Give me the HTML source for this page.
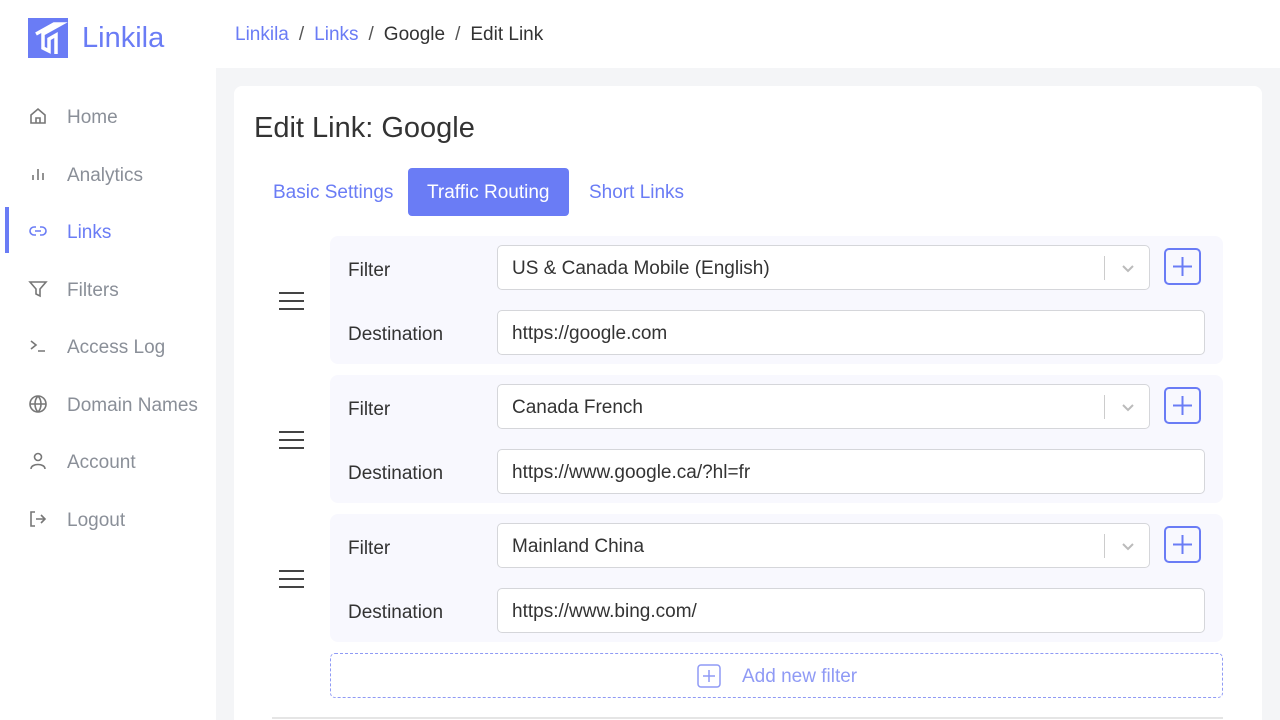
<!DOCTYPE html>
<html style="width:1280px;height:720px;overflow:hidden"><head><style>
*{box-sizing:border-box;margin:0;padding:0}
body{width:1280px;height:720px;overflow:hidden;background:#f4f5f7;font-family:"Liberation Sans",sans-serif;position:relative;color:#333}
.side{position:absolute;left:0;top:0;width:216px;height:720px;background:#fff}
.logo{position:absolute;left:28px;top:18px}
.logotxt{position:absolute;left:82px;top:22px;font-size:29px;color:#6a7cf5}
.nav{position:absolute;left:0;width:216px;height:40px;display:flex;align-items:center;font-size:19px;color:#8a8f98}
.nav svg{position:absolute;left:28px}
.nav span{position:absolute;left:67px;top:11px}
.nav.act{color:#6a7cf5}
.bar{position:absolute;left:5px;width:4px;height:46px;background:#6a7cf5;top:207px}
.top{position:absolute;left:216px;top:0;width:1064px;height:68px;background:#fff;font-size:19px;padding:24px 0 0 19px;color:#333}
.top a{color:#6a7cf5}
.top i{font-style:normal;color:#555;margin:0 10px}
.card{position:absolute;left:234px;top:86px;width:1028px;height:634px;background:#fff;border-radius:8px 8px 0 0}
h1{position:absolute;left:254px;top:112px;font-size:29px;font-weight:normal;color:#333}
.tab{position:absolute;top:168px;height:48px;font-size:19px;color:#6a7cf5;line-height:50px}
.tab.on{background:#6a7cf5;color:#fff;border-radius:4px;padding:0 19px}
.row{position:absolute;left:330px;width:893px;height:128px;background:#f8f8fe;border-radius:8px}
.lbl{position:absolute;left:18px;font-size:19px;color:#333}
.inp{position:absolute;left:167px;height:45px;background:#fff;border:1px solid #d5d6da;border-radius:5px;font-size:19px;padding:0 14px;line-height:46px;color:#333}
.sel{width:653px;top:9px}
.dst{width:708px;top:74px}
.sep{position:absolute;right:44px;top:10px;width:1px;height:24px;background:#ccc}
.chev{position:absolute;right:14px;top:15px}
.plus{position:absolute;left:834px;top:12px;width:37px;height:37px;border:2px solid #6a7cf5;border-radius:5px}
.ham{position:absolute;left:279px}
.ham div{width:25px;height:2px;background:#444;margin-bottom:6px}
.add{position:absolute;left:330px;top:653px;width:893px;height:45px;border:1px dashed #8f9af5;border-radius:5px;color:#8f9af5;font-size:19px;line-height:46px;padding-left:411px}
</style></head><body>
<div class="side">
<svg class="logo" width="40" height="40" viewBox="0 0 40 40"><rect width="40" height="40" fill="#6a7cf5"/><path d="M8 16 L26 6 L33 6 L15 16 L15 30 L21 33 L21 21 L28 17 L28 36" fill="none" stroke="#fff" stroke-width="3.5"/></svg>
<div class="logotxt">Linkila</div>
<div class="nav" style="top:96px"><svg width="20" height="20" viewBox="0 0 20 20" fill="none" stroke="#777" stroke-width="1.6"><path d="M3 9 L10 3 L17 9 V17 H3 Z M8 17 V12 H12 V17"/></svg><span>Home</span></div>
<div class="nav" style="top:154px"><svg width="20" height="20" viewBox="0 0 20 20" fill="none" stroke="#777" stroke-width="1.6"><path d="M5 16V11M10 16V5M15 16V9"/></svg><span>Analytics</span></div>
<div class="bar"></div>
<div class="nav act" style="top:211px"><svg width="20" height="20" viewBox="0 0 20 20" fill="none" stroke="#6a7cf5" stroke-width="1.6"><path d="M8 6H6a4 4 0 0 0 0 8h2M12 6h2a4 4 0 0 1 0 8h-2M7 10h6"/></svg><span>Links</span></div>
<div class="nav" style="top:269px"><svg width="20" height="20" viewBox="0 0 20 20" fill="none" stroke="#777" stroke-width="1.6"><path d="M2 3H18L12 10V17L8 15V10Z"/></svg><span>Filters</span></div>
<div class="nav" style="top:326px"><svg width="20" height="20" viewBox="0 0 20 20" fill="none" stroke="#777" stroke-width="1.6"><path d="M3 5L8 9L3 13M10 15H17"/></svg><span>Access Log</span></div>
<div class="nav" style="top:384px"><svg width="20" height="20" viewBox="0 0 20 20" fill="none" stroke="#777" stroke-width="1.6"><circle cx="10" cy="10" r="8"/><path d="M2 10H18M10 2C6 6 6 14 10 18M10 2C14 6 14 14 10 18"/></svg><span>Domain Names</span></div>
<div class="nav" style="top:441px"><svg width="20" height="20" viewBox="0 0 20 20" fill="none" stroke="#777" stroke-width="1.6"><circle cx="10" cy="6" r="3.5"/><path d="M3 18C3 12 17 12 17 18"/></svg><span>Account</span></div>
<div class="nav" style="top:499px"><svg width="20" height="20" viewBox="0 0 20 20" fill="none" stroke="#777" stroke-width="1.6"><path d="M7 3H3V17H7M8 10H17M13 6L17 10L13 14"/></svg><span>Logout</span></div>
</div>
<div class="top"><a>Linkila</a><i>/</i><a>Links</a><i>/</i>Google<i>/</i>Edit Link</div>
<div class="card"></div>
<h1>Edit Link: Google</h1>
<div class="tab" style="left:273px">Basic Settings</div>
<div class="tab on" style="left:408px">Traffic Routing</div>
<div class="tab" style="left:589px">Short Links</div>

<div class="ham" style="top:292px"><div></div><div></div><div></div></div>
<div class="row" style="top:236px"><div class="lbl" style="top:24px">Filter</div><div class="lbl" style="top:88px">Destination</div>
<div class="inp sel">US &amp; Canada Mobile (English)<div class="sep"></div><svg class="chev" width="14" height="14" viewBox="0 0 14 14"><path d="M2 5L7 10L12 5" fill="none" stroke="#bbb" stroke-width="2"/></svg></div>
<div class="plus"><svg width="33" height="33" viewBox="0 0 33 33"><path d="M16.5 7V26M7 16.5H26" stroke="#6a7cf5" stroke-width="2"/></svg></div>
<div class="inp dst">https://google.com</div></div>

<div class="ham" style="top:431px"><div></div><div></div><div></div></div>
<div class="row" style="top:375px"><div class="lbl" style="top:24px">Filter</div><div class="lbl" style="top:88px">Destination</div>
<div class="inp sel">Canada French<div class="sep"></div><svg class="chev" width="14" height="14" viewBox="0 0 14 14"><path d="M2 5L7 10L12 5" fill="none" stroke="#bbb" stroke-width="2"/></svg></div>
<div class="plus"><svg width="33" height="33" viewBox="0 0 33 33"><path d="M16.5 7V26M7 16.5H26" stroke="#6a7cf5" stroke-width="2"/></svg></div>
<div class="inp dst">https://www.google.ca/?hl=fr</div></div>

<div class="ham" style="top:570px"><div></div><div></div><div></div></div>
<div class="row" style="top:514px"><div class="lbl" style="top:24px">Filter</div><div class="lbl" style="top:88px">Destination</div>
<div class="inp sel">Mainland China<div class="sep"></div><svg class="chev" width="14" height="14" viewBox="0 0 14 14"><path d="M2 5L7 10L12 5" fill="none" stroke="#bbb" stroke-width="2"/></svg></div>
<div class="plus"><svg width="33" height="33" viewBox="0 0 33 33"><path d="M16.5 7V26M7 16.5H26" stroke="#6a7cf5" stroke-width="2"/></svg></div>
<div class="inp dst">https://www.bing.com/</div></div>

<div class="add"><svg width="24" height="24" viewBox="0 0 24 24" style="position:absolute;left:366px;top:10px"><rect x="1" y="1" width="22" height="22" rx="3" fill="none" stroke="#8f9af5" stroke-width="1.5"/><path d="M12 6V18M6 12H18" stroke="#8f9af5" stroke-width="1.5"/></svg>Add new filter</div>
<div style="position:absolute;left:272px;top:717px;width:951px;height:2px;background:#e5e5e5"></div>
</body></html>
